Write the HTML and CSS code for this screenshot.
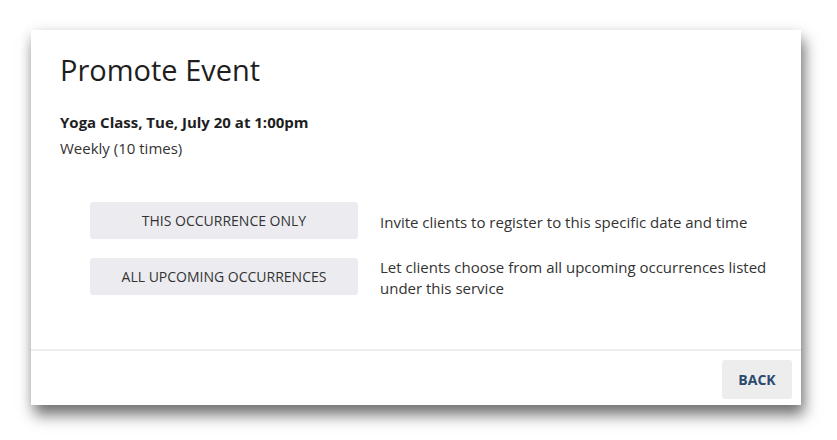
FILE: index.html
```html
<!DOCTYPE html>
<html lang="en">
<head>
    <meta charset="UTF-8">
    <title>Promote Event</title>
    <link rel="stylesheet" href="styles.css">
</head>
<body>
    <div class="dialog">
        <div class="dialog-body">
            <h1>Promote Event</h1>
            <p class="event-name">Yoga Class, Tue, July 20 at 1:00pm</p>
            <p class="event-repeat">Weekly (10 times)</p>

            <div class="options">
                <div class="option">
                    <button class="option-btn">THIS OCCURRENCE ONLY</button>
                    <span class="option-text">Invite clients to register to this specific date and time</span>
                </div>
                <div class="option">
                    <button class="option-btn">ALL UPCOMING OCCURRENCES</button>
                    <span class="option-text">Let clients choose from all upcoming occurrences listed under this service</span>
                </div>
            </div>
        </div>
        <div class="dialog-footer">
            <button class="back-btn">BACK</button>
        </div>
    </div>
</body>
</html>
```

FILE: styles.css
```css
html, body {
    height: 100%;
}
body {
    margin: 0;
    padding: 30px 0 0 31px;
    box-sizing: border-box;
    background: #fff;
    font-family: 'Open Sans', 'Liberation Sans', Arial, sans-serif;
    color: #222;
}
.dialog {
    width: 770px;
    height: 375px;
    background: #fff;
    display: flex;
    flex-direction: column;
    box-shadow: 3px 10px 14px rgba(0,0,0,0.55), 0 0 12px rgba(0,0,0,0.07);
}
.dialog-body {
    flex: 1;
    padding: 22px 29px 0;
}
h1 {
    font-size: 29px;
    font-weight: 400;
    margin: 0 0 22px;
    line-height: 36px;
    color: #1e1e1e;
}
.event-name {
    margin: 0;
    font-size: 15px;
    font-weight: 700;
    line-height: 24px;
    color: #1e1e1e;
}
.event-repeat {
    margin: 2px 0 0;
    font-size: 15px;
    line-height: 24px;
    color: #333;
}
.options {
    margin: 42px 0 0 30px;
    display: flex;
    flex-direction: column;
    gap: 15px;
}
.option {
    display: flex;
    align-items: center;
    gap: 22px;
}
.option-btn {
    width: 268px;
    height: 37px;
    flex: none;
    border: none;
    border-radius: 3px;
    background: #ececf0;
    font-family: inherit;
    font-size: 14px;
    color: #333;
    cursor: pointer;
}
.option-text {
    font-size: 15px;
    line-height: 21px;
    color: #333;
    width: 400px;
    padding-top: 3px;
}
.dialog-footer {
    height: 54px;
    border-top: 2px solid #eeeeee;
    display: flex;
    align-items: center;
    justify-content: flex-end;
    padding: 0 9px;
}
.back-btn {
    width: 70px;
    height: 39px;
    border: none;
    border-radius: 3px;
    background: #ededed;
    font-family: inherit;
    font-size: 14px;
    font-weight: 700;
    color: #2b4a6f;
    cursor: pointer;
    margin-top: 3px;
}
```
